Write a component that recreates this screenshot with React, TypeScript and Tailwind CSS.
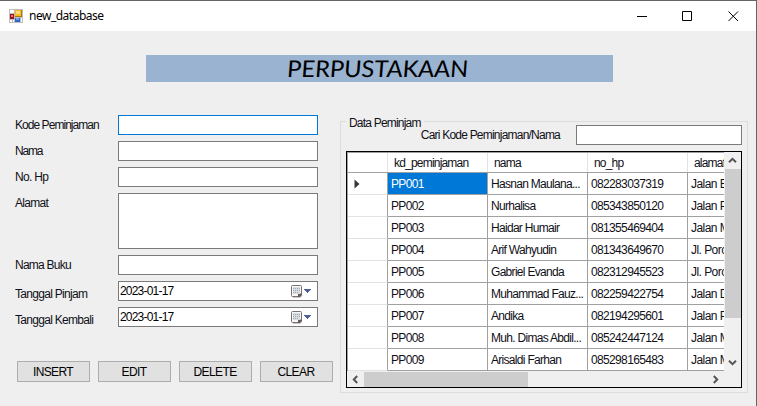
import React from "react";

const rows = [
  ["PP001", "Hasnan Maulana...", "082283037319", "Jalan Baru"],
  ["PP002", "Nurhalisa", "085343850120", "Jalan Poros"],
  ["PP003", "Haidar Humair", "081355469404", "Jalan Mawar"],
  ["PP004", "Arif Wahyudin", "081343649670", "Jl. Poros"],
  ["PP005", "Gabriel Evanda", "082312945523", "Jl. Poros"],
  ["PP006", "Muhammad Fauz...", "082259422754", "Jalan Damai"],
  ["PP007", "Andika", "082194295601", "Jalan Poros"],
  ["PP008", "Muh. Dimas Abdil...", "085242447124", "Jalan Mawar"],
  ["PP009", "Arisaldi Farhan", "085298165483", "Jalan Mawar"],
];

const columnTracking = ["tracking-[-0.65px]", "tracking-[-0.7px]", "tracking-[-0.65px]", "tracking-[-0.55px]"];

function AppIcon() {
  return (
    <svg width="14" height="14" viewBox="0 0 14 14" shapeRendering="crispEdges">
      <rect width="14" height="14" fill="#bdbdbd" />
      <rect x="1" y="1" width="4" height="3" fill="#fff" />
      <rect x="1" y="5" width="4" height="5" fill="#a01218" />
      <rect x="2" y="6" width="2" height="2" fill="#e8787c" />
      <rect x="6" y="1" width="7" height="7" fill="#a67a10" />
      <rect x="6" y="1" width="6" height="6" fill="#f6bd1c" />
      <rect x="7" y="2" width="4" height="3" fill="#fbdc78" />
      <rect x="1" y="11" width="2" height="2" fill="#fff" />
      <rect x="4" y="11" width="1" height="2" fill="#fff" />
      <rect x="6" y="9" width="5" height="4" fill="#2f66c8" />
      <rect x="7" y="9" width="3" height="2" fill="#78a4ee" />
      <rect x="12" y="9" width="1" height="4" fill="#fff" />
    </svg>
  );
}

function CalendarIcon() {
  return (
    <svg width="21" height="14" viewBox="0 0 21 14">
      <path d="M2 12.5H9L11.5 10.5" stroke="#c9c5c5" fill="none" />
      <path d="M1.5 .5H9.5Q10.5 .5 10.5 1.5V8.5L7.5 11.5H1.5Q.5 11.5 .5 10.5V1.5Q.5 .5 1.5 .5Z" fill="#f7f7f8" stroke="#7c7072" />
      <path d="M7 12V8.5H11V10L9 12Z" fill="#66595b" />
      <g fill="#9aa8b5" shapeRendering="crispEdges">
        <rect x="2" y="2" width="7" height="7" fill="#d8dde2" />
        <path d="M2 3h1v1H2zM4 3h1v1H4zM6 3h1v1H6zM8 3h1v1H8zM2 5h1v1H2zM4 5h1v1H4zM6 5h1v1H6zM8 5h1v1H8zM2 7h1v1H2zM4 7h1v1H4zM6 7h1v1H6z" />
      </g>
      <path d="M13 4h7v1h-1v1h-1v1h-1v1h-1V7h-1V6h-1V5h-1z" fill="#4a6096" shapeRendering="crispEdges" />
    </svg>
  );
}

function Chevron({ className }: { className: string }) {
  return (
    <svg className={className} width="9" height="9" viewBox="0 0 9 9">
      <path d="M1 6.2 4.5 2.8 8 6.2" fill="none" stroke="#555" strokeWidth="2" />
    </svg>
  );
}

function Field({ label, focus, tall, date, low, spacing = "tracking-[-0.7px]" }: { label: string; focus?: boolean; tall?: boolean; date?: boolean; low?: boolean; spacing?: string }) {
  return (
    <div className={`flex ${tall ? "h-14" : "h-5"}`}>
      <div className={`w-[103px] shrink-0 leading-5 ${spacing} ${low ? "pt-[3px]" : ""}`}>{label}</div>
      <div className={`flex w-[200px] justify-between border bg-white ${focus ? "border-[#0078d7]" : "border-[#7a7a7a]"}`}>
        {date && (
          <>
            <span className="pl-px leading-[18px] tracking-[-0.8px] text-black">2023-01-17</span>
            <span className="pt-[3px] pr-[5px]"><CalendarIcon /></span>
          </>
        )}
      </div>
    </div>
  );
}

function Cell({ children, selected, spacing }: { children: string; selected?: boolean; spacing: string }) {
  return (
    <div className={`w-[100px] shrink-0 overflow-hidden border-r border-b border-[#a0a0a0] pl-[3px] leading-[23px] whitespace-nowrap ${spacing} ${selected ? "bg-[#0078d7] text-white" : ""}`}>
      {children}
    </div>
  );
}

export default function App() {
  return (
    <div className="flex h-[406px] w-[757px] flex-col overflow-hidden border-t border-r border-[#646464] bg-[#efefef] font-['Liberation_Sans',Arial,sans-serif] text-[12px] tracking-[-0.65px] whitespace-nowrap text-[#101018]">
      <header className="flex h-[30px] shrink-0 items-center bg-white pl-[9px]">
        <AppIcon />
        <span className="ml-[6px] font-['Noto_Sans',sans-serif] text-[12px] tracking-[-0.5px] text-black">new_database</span>
        <svg className="ml-auto mr-[17px]" width="102" height="11" viewBox="0 0 102 11" fill="none" stroke="#000">
          <path d="M0 5.5H10" />
          <path d="M45.5.5h9v9h-9z" />
          <path d="m91.5.5 9.5 9.5M101 .5 91.5 10" />
        </svg>
      </header>

      <h1 className="mt-6 ml-[146px] flex h-[27px] w-[467px] shrink-0 items-center justify-center bg-[#99b3d1] font-['Lato',sans-serif] text-[23px] tracking-[-0.1px] text-black italic">
        <span className="mr-1 scale-x-[1.11] skew-x-3">PERPUSTAKAAN</span>
      </h1>

      <main className="flex">
        <section className="w-[340px] shrink-0 pt-[33px] pl-[15px]">
          <div className="flex flex-col gap-1.5">
            <Field label="Kode Peminjaman" focus spacing="tracking-[-0.95px]" />
            <Field label="Nama" spacing="tracking-[-1.2px]" />
            <Field label="No. Hp" />
            <Field label="Alamat" tall />
            <Field label="Nama Buku" spacing="tracking-[-0.75px]" />
            <Field label="Tanggal Pinjam" date low />
            <Field label="Tanggal Kembali" date low />
          </div>
          <div className="mt-[34px] flex gap-2 pl-0.5">
            {["INSERT", "EDIT", "DELETE", "CLEAR"].map((name) => (
              <button key={name} className="h-[21px] w-[73px] border border-[#adadad] bg-[#e1e1e1] pr-px text-[12px] leading-[20px] tracking-[-0.6px] text-black">
                {name}
              </button>
            ))}
          </div>
        </section>

        <section className="mt-[39px] h-[272px] w-[408px] border border-[#dcdcdc] px-[5px]">
          <div className="flex h-[29px]">
            <div className="-mt-2 -mr-5 h-4 shrink-0 bg-[#efefef] px-[3px] leading-[18px] tracking-[-0.8px]">Data Peminjam</div>
            <div className="ml-auto shrink-0 pt-[3px] leading-5 tracking-[-0.78px]">Cari Kode Peminjaman/Nama</div>
            <div className="mt-[3px] ml-4 h-5 w-[166px] shrink-0 border border-[#7a7a7a] bg-white" />
          </div>

          <div className="h-[237px] w-[396px] border border-black bg-[#f0f0f0]">
            <div className="flex h-[219px]">
              <div className="w-[377px] overflow-hidden border-t border-l border-[#a0a0a0] bg-white">
                <div className="flex h-5 w-[441px] border-b border-[#a0a0a0] leading-[20px]">
                  <div className="w-10 border-r border-[#e3e3e3]" />
                  {["kd_peminjaman", "nama", "no_hp", "alamat"].map((name) => (
                    <div key={name} className="w-[100px] border-r border-[#e3e3e3] pl-1.5 tracking-[-0.8px]">{name}</div>
                  ))}
                </div>
                {rows.map((row, i) => (
                  <div key={row[0]} className="flex h-[22px] w-[441px]">
                    <div className="flex w-10 shrink-0 items-center border-r border-b border-r-[#a0a0a0] border-b-[#e3e3e3] pl-1.5">
                      {i === 0 && (
                        <svg width="6" height="10" viewBox="0 0 6 10"><path d="M.5.5V9.5L5.5 5Z" fill="#383838" /></svg>
                      )}
                    </div>
                    {row.map((value, j) => (
                      <Cell key={j} selected={i === 0 && j === 0} spacing={columnTracking[j]}>{value}</Cell>
                    ))}
                  </div>
                ))}
              </div>
              <div className="flex w-[17px] flex-col items-center justify-between pb-1">
                <div className="flex flex-col items-center">
                  <Chevron className="my-1" />
                  <div className="ml-px h-[149px] w-4 bg-[#cdcdcd]" />
                </div>
                <Chevron className="rotate-180" />
              </div>
            </div>
            <div className="flex h-4 items-center pl-1">
              <Chevron className="-rotate-90" />
              <div className="ml-1 h-[15px] w-[164px] bg-[#cdcdcd]" />
              <Chevron className="mr-[21px] ml-auto rotate-90" />
            </div>
          </div>
        </section>
      </main>
    </div>
  );
}
